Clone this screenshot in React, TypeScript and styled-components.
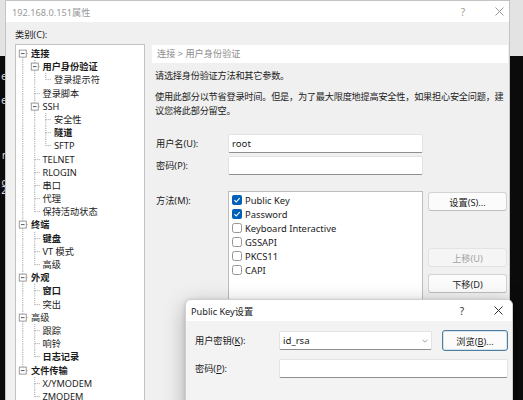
import React from 'react';
import styled, { createGlobalStyle } from 'styled-components';

const GlobalStyle = createGlobalStyle`
  html, body { margin: 0; padding: 0; }
  body {
    width: 523px;
    height: 400px;
    overflow: hidden;
    background: linear-gradient(to bottom, #e3e3e3 0, #e3e3e3 56px, #0b0b0b 56px);
    font-family: "Noto Sans", "Noto Sans CJK SC", sans-serif;
    font-size: 9.2px;
    color: #1b1b1b;
  }
`;

type TreeNode = { label: string; level: number; box?: boolean; bold?: boolean };

const TREE: TreeNode[] = [
  { label: '连接', level: 0, box: true, bold: true },
  { label: '用户身份验证', level: 1, box: true, bold: true },
  { label: '登录提示符', level: 2 },
  { label: '登录脚本', level: 1 },
  { label: 'SSH', level: 1, box: true },
  { label: '安全性', level: 2 },
  { label: '隧道', level: 2, bold: true },
  { label: 'SFTP', level: 2 },
  { label: 'TELNET', level: 1 },
  { label: 'RLOGIN', level: 1 },
  { label: '串口', level: 1 },
  { label: '代理', level: 1 },
  { label: '保持活动状态', level: 1 },
  { label: '终端', level: 0, box: true, bold: true },
  { label: '键盘', level: 1, bold: true },
  { label: 'VT 模式', level: 1 },
  { label: '高级', level: 1 },
  { label: '外观', level: 0, box: true, bold: true },
  { label: '窗口', level: 1, bold: true },
  { label: '突出', level: 1 },
  { label: '高级', level: 0, box: true },
  { label: '跟踪', level: 1 },
  { label: '响铃', level: 1 },
  { label: '日志记录', level: 1, bold: true },
  { label: '文件传输', level: 0, box: true, bold: true },
  { label: 'X/YMODEM', level: 1 },
  { label: 'ZMODEM', level: 1 },
];

const METHODS = [
  { label: 'Public Key', checked: true },
  { label: 'Password', checked: true },
  { label: 'Keyboard Interactive', checked: false },
  { label: 'GSSAPI', checked: false },
  { label: 'PKCS11', checked: false },
  { label: 'CAPI', checked: false },
];

// background terminal glyphs peeking out left of the window
const TERM_GLYPHS = [
  { ch: 'e', gap: 73 },
  { ch: 'e', gap: 16 },
  { ch: 'r', gap: 47 },
  { ch: 'c', gap: 19 },
  { ch: '2', gap: 0 },
];

const ROW_H = 13.2;

const hasNextSibling = (idx: number) => {
  const level = TREE[idx].level;
  for (let j = idx + 1; j < TREE.length; j++) {
    if (TREE[j].level < level) return false;
    if (TREE[j].level === level) return true;
  }
  return false;
};

const Desktop = styled.div`
  position: relative;
  display: flex;
  width: 523px;
  height: 400px;
`;

const TermStrip = styled.div`
  width: 5px;
  flex-shrink: 0;
  display: flex;
  flex-direction: column;
  overflow: hidden;
`;

const TermGlyph = styled.span<{ $gap: number }>`
  display: block;
  height: 8px;
  line-height: 8px;
  margin-top: ${p => p.$gap}px;
  direction: rtl;
  text-align: right;
  font-family: "DejaVu Sans Mono", monospace;
  font-size: 10px;
  color: #d8d8d8;
  margin-right: -2px;
`;

const Window = styled.div`
  width: 505px;
  height: 440px;
  flex-shrink: 0;
  box-sizing: border-box;
  border: 1px solid #c4c4c4;
  background: #f0f0f0;
  display: flex;
  flex-direction: column;
`;

const TitleBar = styled.div<{ $inactive?: boolean; $pr: number }>`
  height: 21px;
  flex-shrink: 0;
  background: #fff;
  display: flex;
  align-items: center;
  padding: 0 ${p => p.$pr}px 0 ${p => (p.$inactive ? 6 : 5)}px;
  color: ${p => (p.$inactive ? '#9a9a9a' : '#1b1b1b')};
`;

const TitleText = styled.span`
  flex: 1;
  white-space: nowrap;
`;

const Controls = styled.div`
  display: flex;
  gap: 16px;
`;

const CtrlButton = styled.span<{ $inactive?: boolean }>`
  width: 20px;
  height: 21px;
  display: flex;
  align-items: center;
  justify-content: center;
  font-size: 10px;
  color: ${p => (p.$inactive ? '#9a9a9a' : '#333')};
`;

const Body = styled.div`
  padding: 6px 1px 0 9px;
  display: flex;
  flex-direction: column;
`;

const CategoryLabel = styled.div`
  height: 13px;
  line-height: 13px;
`;

const Columns = styled.div`
  display: flex;
  gap: 7px;
  margin-top: 3px;
`;

const TreeBox = styled.div`
  width: 130px;
  height: 380px;
  box-sizing: border-box;
  flex-shrink: 0;
  background: #fff;
  border: 1px solid #c3c3c3;
  padding: 2px 0 0 1.25px;
  overflow: hidden;
`;

const TreeRow = styled.div`
  display: flex;
  align-items: center;
  height: ${ROW_H}px;
  white-space: nowrap;
`;

const Connector = styled.svg`
  display: block;
  flex-shrink: 0;
`;

const TreeLabel = styled.span<{ $bold?: boolean }>`
  margin-left: 2.25px;
  line-height: ${ROW_H}px;
  font-weight: ${p => (p.$bold ? 700 : 400)};
  color: #1b1b1b;
`;

const Panel = styled.div`
  flex: 1;
  min-width: 0;
  display: flex;
  flex-direction: column;
  padding-top: 1px;
`;

const Breadcrumb = styled.div`
  height: 18px;
  line-height: 18px;
  background: #fff;
  padding-left: 5px;
  color: #8c8c8c;
`;

const Para = styled.p<{ $mt: number }>`
  margin: ${p => p.$mt}px 0 0 3px;
  line-height: 14px;
  white-space: nowrap;
  letter-spacing: -0.25px;
`;

const FieldRow = styled.div<{ $mt: number }>`
  display: flex;
  align-items: flex-start;
  margin-top: ${p => p.$mt}px;
  padding-left: 4px;
`;

const FieldLabel = styled.label<{ $w: number; $h: number }>`
  width: ${p => p.$w}px;
  flex-shrink: 0;
  height: ${p => p.$h}px;
  line-height: ${p => p.$h}px;
  white-space: nowrap;
`;

const TextBox = styled.div<{ $w: number }>`
  width: ${p => p.$w}px;
  height: 19px;
  flex-shrink: 0;
  box-sizing: border-box;
  background: #fff;
  border: 1px solid #e3e3e3;
  border-bottom-color: #8f8f8f;
  border-radius: 2px;
  padding: 0 3px;
  line-height: 17px;
  font-size: 9.6px;
  display: flex;
  align-items: center;
`;

const ComboText = styled.span`
  flex: 1;
`;

const ListBox = styled.div`
  width: 195px;
  height: 150px;
  flex-shrink: 0;
  box-sizing: border-box;
  background: #fff;
  border: 1px solid #bdbdbd;
  padding: 1px 3px;
  display: flex;
  flex-direction: column;
`;

const CheckItem = styled.div`
  display: flex;
  align-items: center;
  gap: 3px;
  height: 14px;
  white-space: nowrap;
  font-size: 9.4px;
`;

const ButtonColumn = styled.div`
  width: 79px;
  margin-left: 5px;
  padding-top: 1px;
  display: flex;
  flex-direction: column;
`;

const Button = styled.button<{ $mt?: number; $ml?: number; $w?: number; $h?: number; $default?: boolean }>`
  width: ${p => p.$w ?? 79}px;
  height: ${p => p.$h ?? 19}px;
  flex-shrink: 0;
  margin: ${p => p.$mt ?? 0}px 0 0 ${p => p.$ml ?? 0}px;
  padding: 0;
  box-sizing: border-box;
  font: inherit;
  color: #1b1b1b;
  background: #fbfbfb;
  border: 1px solid ${p => (p.$default ? '#4f7f9c' : '#d3d3d3')};
  border-bottom-color: ${p => (p.$default ? '#4f7f9c' : '#bdbdbd')};
  box-shadow: ${p => (p.$default ? 'inset 0 0 0 1px #d5e3ec' : 'none')};
  border-radius: 3px;

  &:disabled {
    color: #a3a3a3;
    background: #f5f5f5;
    border-color: #e3e3e3;
  }
`;

const Dialog = styled.div`
  position: absolute;
  left: 185px;
  top: 299px;
  width: 328px;
  height: 130px;
  box-sizing: border-box;
  background: #f3f3f3;
  border: 1px solid #cfcfcf;
  border-radius: 6px 6px 0 0;
  overflow: hidden;
  box-shadow: 0 6px 22px rgba(0, 0, 0, 0.28), 0 1px 4px rgba(0, 0, 0, 0.15);
  display: flex;
  flex-direction: column;
`;

const DialogBody = styled.div`
  padding: 9px 4px 0 9px;
  display: flex;
  flex-direction: column;
`;

const DialogRow = styled.div<{ $mt?: number }>`
  display: flex;
  align-items: center;
  margin-top: ${p => p.$mt ?? 0}px;
`;

const Close = ({ color }: { color: string }) => (
  <svg width="9" height="9" viewBox="0 0 9 9">
    <path d="M0.5 0.5 L8.5 8.5 M8.5 0.5 L0.5 8.5" stroke={color} strokeWidth="1" />
  </svg>
);

const TreeConnector = ({ up, down, right, box }: { up?: boolean; down?: boolean; right?: boolean; box?: boolean }) => {
  const cx = 5.75;
  const cy = ROW_H / 2;
  const line = { stroke: '#a3a3a3', strokeWidth: 1, strokeDasharray: '1 1' };
  return (
    <Connector width="11.5" height={ROW_H} viewBox={`0 0 11.5 ${ROW_H}`}>
      {up && <line x1={cx} y1={0} x2={cx} y2={cy} {...line} />}
      {down && <line x1={cx} y1={cy} x2={cx} y2={ROW_H} {...line} />}
      {right && <line x1={cx} y1={cy} x2={11.5} y2={cy} {...line} />}
      {box && (
        <>
          <rect x={cx - 3.5} y={cy - 3.5} width={7} height={7} fill="#fff" stroke="#8f8f8f" strokeWidth="0.9" />
          <line x1={cx - 1.8} y1={cy} x2={cx + 1.8} y2={cy} stroke="#444" strokeWidth="0.9" />
        </>
      )}
    </Connector>
  );
};

const CheckBox = ({ checked }: { checked: boolean }) =>
  checked ? (
    <svg width="10" height="10" viewBox="0 0 10 10">
      <rect x="0" y="0" width="10" height="10" rx="2" fill="#005fb8" />
      <path d="M2.4 5.2 L4.2 7 L7.7 3.2" fill="none" stroke="#fff" strokeWidth="1.1" />
    </svg>
  ) : (
    <svg width="10" height="10" viewBox="0 0 10 10">
      <rect x="0.5" y="0.5" width="9" height="9" rx="2" fill="#fff" stroke="#8a8a8a" strokeWidth="0.9" />
    </svg>
  );

const Chevron = () => (
  <svg width="6" height="4" viewBox="0 0 6 4">
    <path d="M0.5 0.8 L3 3.2 L5.5 0.8" fill="none" stroke="#8a8a8a" strokeWidth="0.8" />
  </svg>
);

const Tree: React.FC = () => (
  <TreeBox>
    {TREE.map((node, i) => {
      const cells = [];
      for (let c = 0; c < node.level; c++) {
        let a = i - 1;
        while (a >= 0 && TREE[a].level !== c) a--;
        cells.push(<TreeConnector key={c} up={hasNextSibling(a)} down={hasNextSibling(a)} />);
      }
      cells.push(
        <TreeConnector key="own" up={i > 0} down={hasNextSibling(i)} right box={node.box} />
      );
      return (
        <TreeRow key={i}>
          {cells}
          <TreeLabel $bold={node.bold}>{node.label}</TreeLabel>
        </TreeRow>
      );
    })}
  </TreeBox>
);

export default function App() {
  return (
    <>
      <GlobalStyle />
      <Desktop>
        <TermStrip>
          {TERM_GLYPHS.map((g, i) => (
            <TermGlyph key={i} $gap={g.gap}>{g.ch}</TermGlyph>
          ))}
        </TermStrip>

        <Window>
          <TitleBar $inactive $pr={0}>
            <TitleText>192.168.0.151属性</TitleText>
            <Controls>
              <CtrlButton $inactive>?</CtrlButton>
              <CtrlButton $inactive><Close color="#9a9a9a" /></CtrlButton>
            </Controls>
          </TitleBar>

          <Body>
            <CategoryLabel>类别(C):</CategoryLabel>
            <Columns>
              <Tree />
              <Panel>
                <Breadcrumb>连接 &gt; 用户身份验证</Breadcrumb>
                <Para $mt={6}>请选择身份验证方法和其它参数。</Para>
                <Para $mt={7}>
                  使用此部分以节省登录时间。但是，为了最大限度地提高安全性，如果担心安全问题，建
                  <br />
                  议您将此部分留空。
                </Para>

                <FieldRow $mt={16}>
                  <FieldLabel $w={72} $h={19}>用户名(U):</FieldLabel>
                  <TextBox $w={195}>root</TextBox>
                </FieldRow>
                <FieldRow $mt={3}>
                  <FieldLabel $w={72} $h={19}>密码(P):</FieldLabel>
                  <TextBox $w={195} />
                </FieldRow>

                <FieldRow $mt={16}>
                  <FieldLabel $w={72} $h={19}>方法(M):</FieldLabel>
                  <ListBox>
                    {METHODS.map(m => (
                      <CheckItem key={m.label}>
                        <CheckBox checked={m.checked} />
                        {m.label}
                      </CheckItem>
                    ))}
                  </ListBox>
                  <ButtonColumn>
                    <Button>设置(S)...</Button>
                    <Button $mt={37} disabled>上移(U)</Button>
                    <Button $mt={7}>下移(D)</Button>
                  </ButtonColumn>
                </FieldRow>
              </Panel>
            </Columns>
          </Body>
        </Window>

        <Dialog>
          <TitleBar $pr={4}>
            <TitleText>Public Key设置</TitleText>
            <Controls>
              <CtrlButton>?</CtrlButton>
              <CtrlButton><Close color="#333" /></CtrlButton>
            </Controls>
          </TitleBar>
          <DialogBody>
            <DialogRow>
              <FieldLabel $w={84} $h={21}>用户密钥(<u>K</u>):</FieldLabel>
              <TextBox $w={153}>
                <ComboText>id_rsa</ComboText>
                <Chevron />
              </TextBox>
              <Button $w={66} $h={21} $ml={10} $default>浏览(<u>B</u>)...</Button>
            </DialogRow>
            <DialogRow $mt={8}>
              <FieldLabel $w={84} $h={19}>密码(<u>P</u>):</FieldLabel>
              <TextBox $w={229} />
            </DialogRow>
          </DialogBody>
        </Dialog>
      </Desktop>
    </>
  );
}
